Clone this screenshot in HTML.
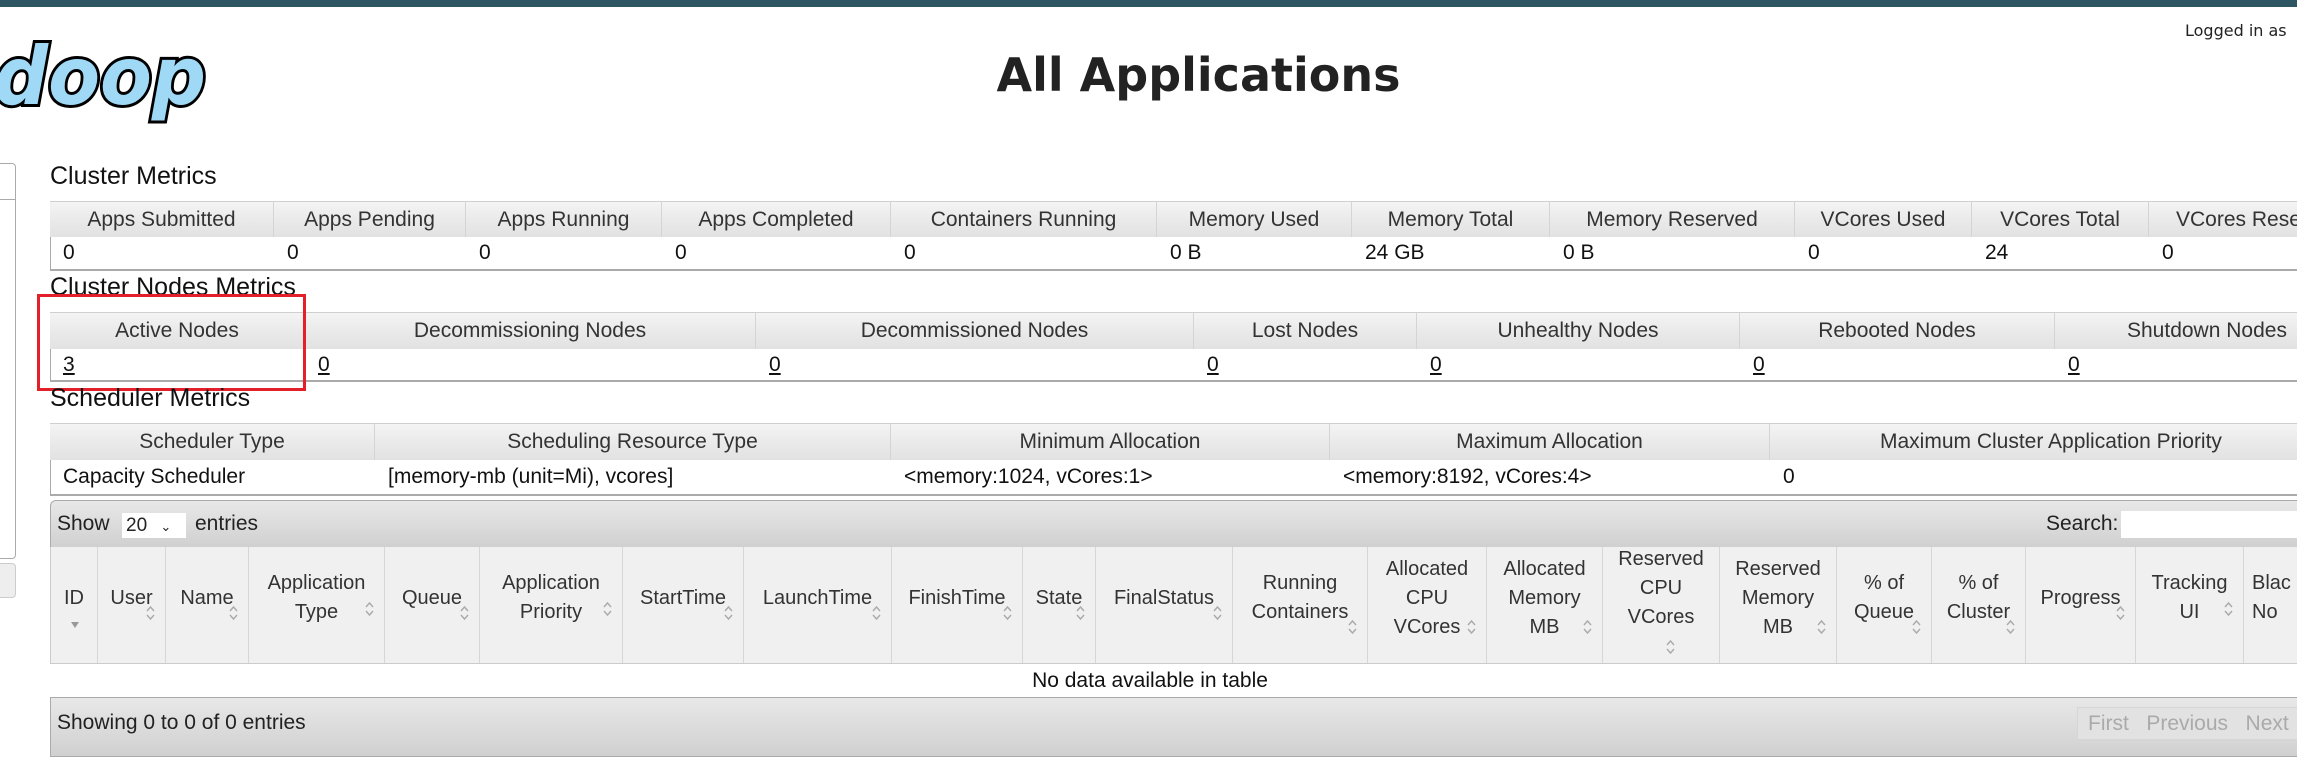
<!DOCTYPE html>
<html><head><meta charset="utf-8">
<style>
*{box-sizing:border-box;margin:0;padding:0}
body{width:2297px;height:747px;overflow:hidden;background:#fff;position:relative;font-family:"Liberation Sans",sans-serif;color:#222}
.abs{position:absolute}
.h2{position:absolute;left:50px;font-size:25px;color:#111;line-height:30px}
.row{position:absolute;left:50px;display:flex;white-space:nowrap}
.row>div{flex:none;overflow:hidden;font-size:21px}
.hd>div{background:linear-gradient(#f4f4f4,#eaeaea 50%,#e2e2e2);border-right:1px solid #d4d4d4;border-top:1px solid #cfcfcf;text-align:center;color:#333;display:flex;align-items:center;justify-content:center}
.dt>div{padding-left:12px;display:flex;align-items:center;color:#111}
.dt{border-left:1px solid #aaa;border-bottom:2px solid #aaa}
.dt u{text-decoration:underline}
.tb{position:absolute;left:50px;width:2260px;background:linear-gradient(#e8e8e8,#d0d0d0);border:1px solid #aaa;font-size:21px;color:#222}
.dh{position:absolute;left:50px;top:547px;height:117px;display:flex;border-bottom:1px solid #ccc}
.dh>div{flex:none;position:relative;background:#f0f0f0;border-right:1px solid #d6d6d6;text-align:center;font-size:20px;line-height:29px;color:#333;display:flex;align-items:center;justify-content:center;padding-bottom:14px;overflow:hidden}
.s{position:absolute;right:10px;bottom:42px;width:9px;height:16px}
.s3{bottom:28px}
</style></head><body>
<div class="abs" style="left:0;top:0;width:2297px;height:7px;background:#2e5562"></div>
<svg class="abs" style="left:0;top:38px" width="215" height="95"><text x="-6" y="66" textLength="212" lengthAdjust="spacingAndGlyphs" font-family="DejaVu Sans" font-weight="bold" font-style="italic" font-size="80" fill="#9fd9f6" stroke="#000" stroke-width="6" paint-order="stroke">doop</text></svg>
<div class="abs" style="left:0;width:2397px;top:48px;text-align:center;font-family:'DejaVu Sans',sans-serif;font-weight:bold;font-size:46px;color:#222">All Applications</div>
<div class="abs" style="left:2185px;top:21px;font-family:'DejaVu Sans',sans-serif;font-size:16px;white-space:nowrap">Logged in as</div>
<div class="abs" style="left:-10px;top:163px;width:26px;height:396px;border:1px solid #aaa;border-radius:4px"></div>
<div class="abs" style="left:-10px;top:199px;width:26px;height:1px;background:#aaa"></div>
<div class="abs" style="left:-10px;top:563px;width:26px;height:35px;border:1px solid #ccc;border-radius:4px;background:#eee"></div>

<div class="h2" style="top:161px">Cluster Metrics</div>
<div class="row hd" style="top:201px;height:36px"><div style="width:224px">Apps Submitted</div><div style="width:192px">Apps Pending</div><div style="width:196px">Apps Running</div><div style="width:229px">Apps Completed</div><div style="width:266px">Containers Running</div><div style="width:195px">Memory Used</div><div style="width:198px">Memory Total</div><div style="width:245px">Memory Reserved</div><div style="width:177px">VCores Used</div><div style="width:177px">VCores Total</div><div style="width:160px;justify-content:flex-start;padding-left:27px">VCores Reserved</div></div>
<div class="row dt" style="top:237px;height:34px"><div style="width:224px">0</div><div style="width:192px">0</div><div style="width:196px">0</div><div style="width:229px">0</div><div style="width:266px">0</div><div style="width:195px">0 B</div><div style="width:198px">24 GB</div><div style="width:245px">0 B</div><div style="width:177px">0</div><div style="width:177px">24</div><div style="width:160px">0</div></div>

<div class="h2" style="top:272px">Cluster Nodes Metrics</div>
<div class="row hd" style="top:312px;height:37px"><div style="width:255px">Active Nodes</div><div style="width:451px">Decommissioning Nodes</div><div style="width:438px">Decommissioned Nodes</div><div style="width:223px">Lost Nodes</div><div style="width:323px">Unhealthy Nodes</div><div style="width:315px">Rebooted Nodes</div><div style="width:250px;justify-content:flex-start;padding-left:72px">Shutdown Nodes</div></div>
<div class="row dt" style="top:349px;height:33px"><div style="width:255px"><u>3</u></div><div style="width:451px"><u>0</u></div><div style="width:438px"><u>0</u></div><div style="width:223px"><u>0</u></div><div style="width:323px"><u>0</u></div><div style="width:315px"><u>0</u></div><div style="width:250px"><u>0</u></div></div>
<div class="abs" style="left:37px;top:294px;width:269px;height:97px;border:3px solid #e3202a"></div>

<div class="h2" style="top:383px">Scheduler Metrics</div>
<div class="row hd" style="top:423px;height:37px"><div style="width:325px">Scheduler Type</div><div style="width:516px">Scheduling Resource Type</div><div style="width:439px">Minimum Allocation</div><div style="width:440px">Maximum Allocation</div><div style="width:540px;justify-content:flex-start;padding-left:110px">Maximum Cluster Application Priority</div></div>
<div class="row dt" style="top:460px;height:36px"><div style="width:325px">Capacity Scheduler</div><div style="width:516px">[memory-mb (unit=Mi), vcores]</div><div style="width:439px">&lt;memory:1024, vCores:1&gt;</div><div style="width:440px">&lt;memory:8192, vCores:4&gt;</div><div style="width:540px">0</div></div>

<div class="tb" style="top:500px;height:48px;border-radius:6px 0 0 0">
<span class="abs" style="left:6px;top:11px">Show</span>
<span class="abs" style="left:71px;top:12px;width:64px;height:25px;background:#fff;font-size:19px;padding-left:4px;line-height:25px">20 <span style="font-size:13px;margin-left:8px">&#8964;</span></span>
<span class="abs" style="left:144px;top:11px">entries</span>
<span class="abs" style="left:1995px;top:11px">Search:</span>
<span class="abs" style="left:2070px;top:10px;width:200px;height:27px;background:#fff"></span>
</div>
<svg width="0" height="0" style="position:absolute"><defs><symbol id="si" viewBox="0 0 9 16"><path d="M1 6 L4.5 2 L8 6 M1 10 L4.5 14 L8 10" fill="none" stroke="#aaa" stroke-width="1.4"/></symbol></defs></svg>
<div class="dh">
<div style="width:48px;border-left:1px solid #ccc">ID<svg class="abs" style="left:19px;bottom:34px" width="10" height="8"><path d="M1 1 L9 1 L5 7Z" fill="#999"/></svg></div>
<div style="width:68px">User<svg class="s"><use href="#si"/></svg></div>
<div style="width:83px">Name<svg class="s"><use href="#si"/></svg></div>
<div style="width:136px">Application<br>Type<svg class="s" style="bottom:46px"><use href="#si"/></svg></div>
<div style="width:95px">Queue<svg class="s"><use href="#si"/></svg></div>
<div style="width:143px">Application<br>Priority<svg class="s" style="bottom:46px"><use href="#si"/></svg></div>
<div style="width:121px">StartTime<svg class="s"><use href="#si"/></svg></div>
<div style="width:148px">LaunchTime<svg class="s"><use href="#si"/></svg></div>
<div style="width:131px">FinishTime<svg class="s"><use href="#si"/></svg></div>
<div style="width:73px">State<svg class="s"><use href="#si"/></svg></div>
<div style="width:137px">FinalStatus<svg class="s"><use href="#si"/></svg></div>
<div style="width:135px">Running<br>Containers<svg class="s s3"><use href="#si"/></svg></div>
<div style="width:119px">Allocated<br>CPU<br>VCores<svg class="s s3"><use href="#si"/></svg></div>
<div style="width:116px">Allocated<br>Memory<br>MB<svg class="s s3"><use href="#si"/></svg></div>
<div style="width:117px;padding-bottom:34px">Reserved<br>CPU<br>VCores<svg class="s" style="right:44px;bottom:8px"><use href="#si"/></svg></div>
<div style="width:117px">Reserved<br>Memory<br>MB<svg class="s s3"><use href="#si"/></svg></div>
<div style="width:95px">% of<br>Queue<svg class="s s3"><use href="#si"/></svg></div>
<div style="width:94px">% of<br>Cluster<svg class="s s3"><use href="#si"/></svg></div>
<div style="width:110px">Progress<svg class="s"><use href="#si"/></svg></div>
<div style="width:108px">Tracking<br>UI<svg class="s" style="bottom:46px"><use href="#si"/></svg></div>
<div style="width:60px;justify-content:flex-start;padding-left:8px;text-align:left">Blac<br>No</div>
</div>
<div class="abs" style="left:50px;top:664px;width:2260px;height:33px;text-align:center;font-size:21px;line-height:33px;color:#111;padding-right:60px">No data available in table</div>
<div class="tb" style="top:697px;height:60px">
<span class="abs" style="left:6px;top:13px">Showing 0 to 0 of 0 entries</span>
<span class="abs" style="left:2026px;top:9px;height:33px;width:230px;background:#e2e2e2;border:1px solid #d6d6d6;color:#aaa;line-height:31px;padding-left:10px;white-space:nowrap">First&nbsp;&nbsp;&nbsp;Previous&nbsp;&nbsp;&nbsp;Next</span>
</div>
</body></html>
